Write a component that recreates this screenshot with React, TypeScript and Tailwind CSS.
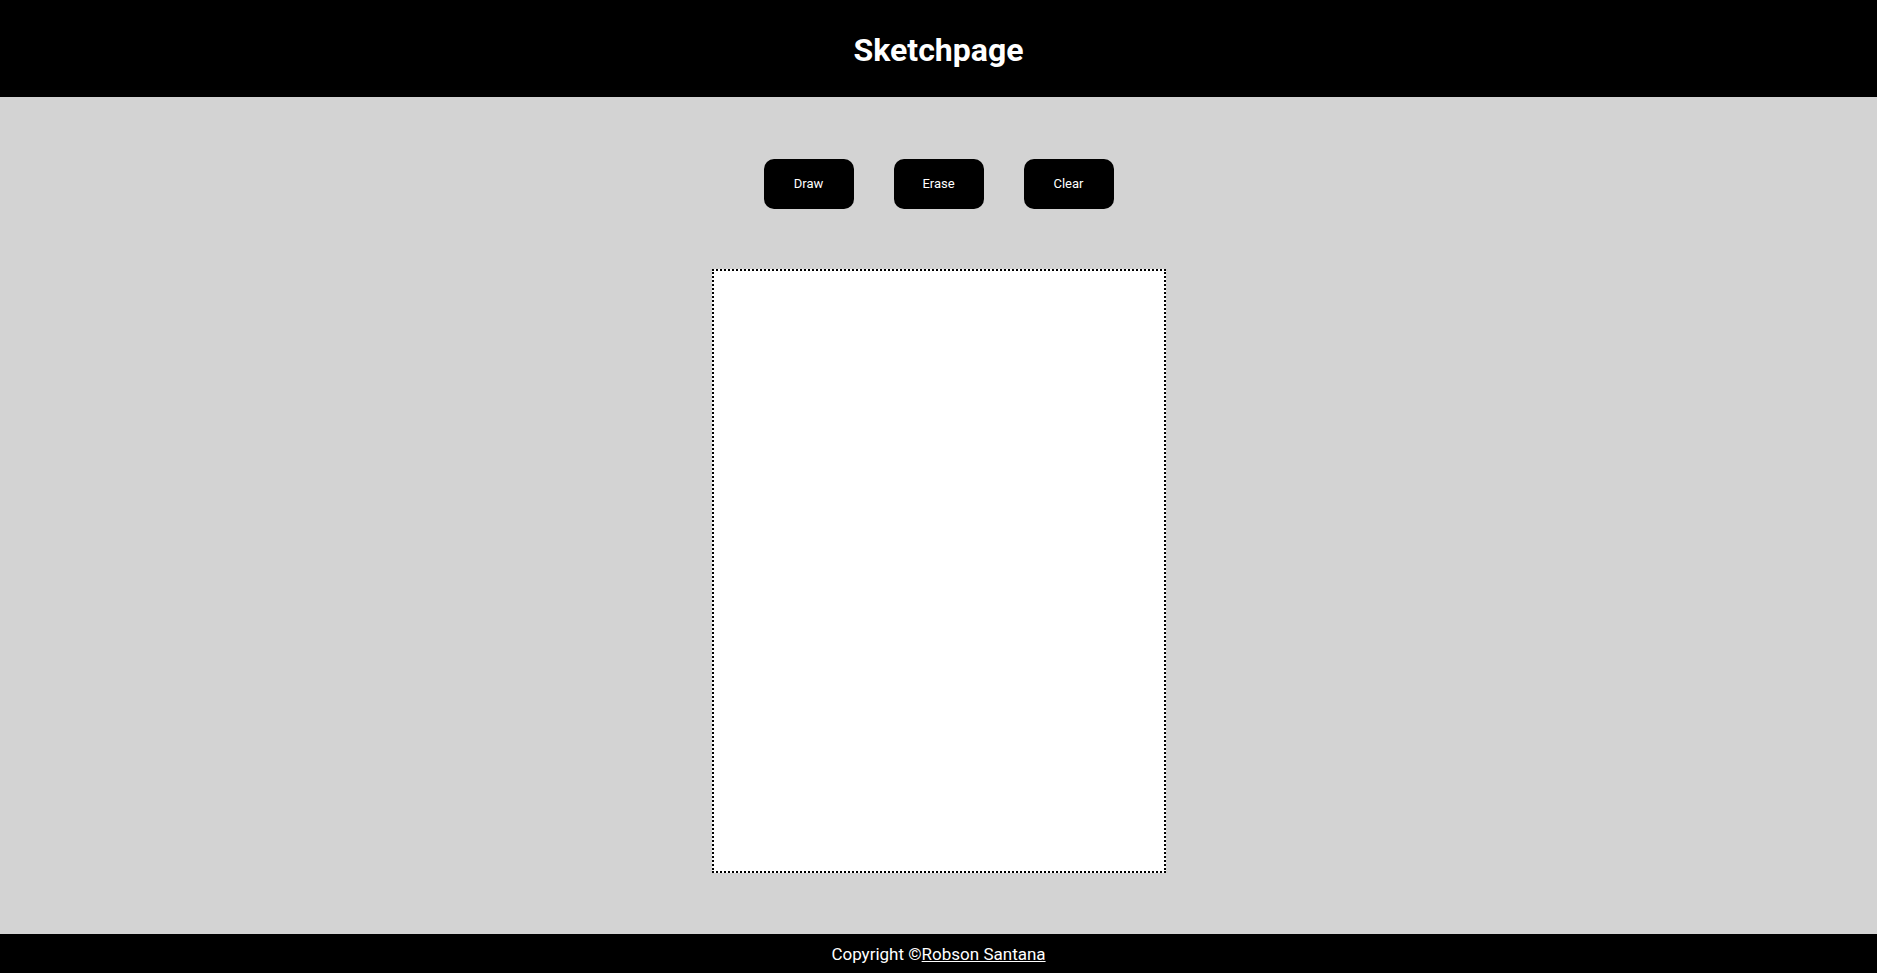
export default function App() {
  return (
    <div className="min-h-screen flex flex-col bg-[#d3d3d3] font-['Roboto',sans-serif]">
      <header className="h-[97px] bg-black flex items-center justify-center">
        <h1 className="text-white text-[32px] font-bold mt-[2px]">Sketchpage</h1>
      </header>
      <main className="flex-1 flex flex-col items-center pt-[62px] pb-[61px]">
        <div className="flex gap-10">
          <button className="w-[90px] h-[50px] rounded-[10px] bg-black text-white text-[13px]">
            Draw
          </button>
          <button className="w-[90px] h-[50px] rounded-[10px] bg-black text-white text-[13px]">
            Erase
          </button>
          <button className="w-[90px] h-[50px] rounded-[10px] bg-black text-white text-[13px]">
            Clear
          </button>
        </div>
        <div className="mt-[60px] w-[454px] h-[604px] bg-white border-2 border-dotted border-black" />
      </main>
      <footer className="h-[39px] bg-black flex items-center justify-center pt-[3px] text-white text-[17px]">
        <span>
          Copyright ©<a className="underline">Robson Santana</a>
        </span>
      </footer>
    </div>
  );
}
